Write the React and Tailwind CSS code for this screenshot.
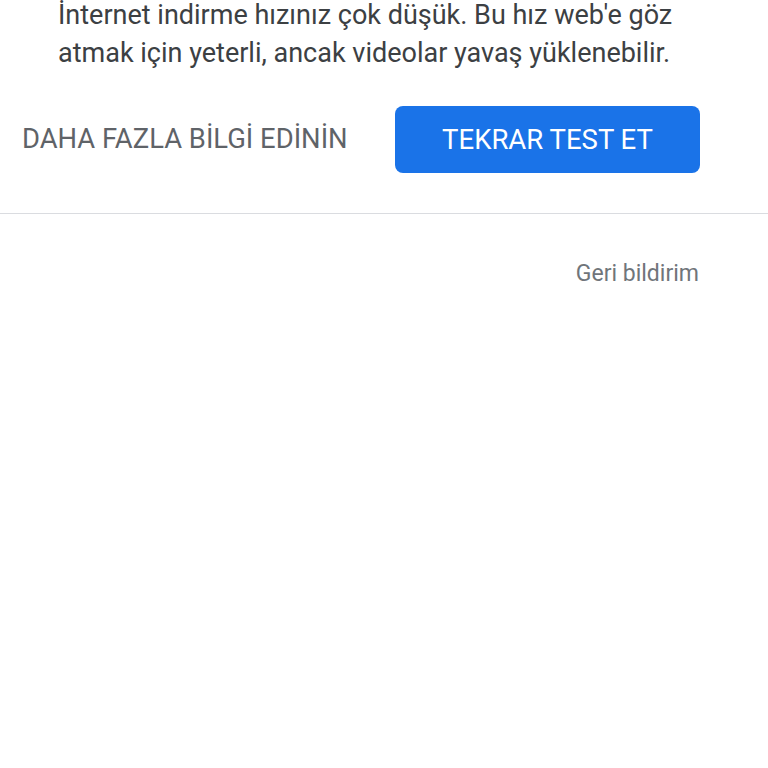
import React from 'react'

const App = () => {
    return (
        <div className="w-[768px] h-[768px] bg-white overflow-hidden" style={{fontFamily: 'Roboto, "Noto Sans", sans-serif'}}>
            <p className="mt-[-4px] pl-[58px] text-[27px] leading-[38px] text-[#3c4043] whitespace-nowrap">
                İnternet indirme hızınız çok düşük. Bu hız web'e göz<br/>
                atmak için yeterli, ancak videolar yavaş yüklenebilir.
            </p>
            <div className="flex items-center justify-between pl-[22px] pr-[68px] mt-[34px]">
                <button className="text-[27.4px] text-[#5f6368]">DAHA FAZLA BİLGİ EDİNİN</button>
                <button className="w-[305px] h-[67px] rounded-lg bg-[#1a73e8] text-white text-[27.5px]">
                    TEKRAR TEST ET
                </button>
            </div>
            <div className="mt-[40px] border-t border-[#dadce0]"></div>
            <div className="flex justify-end pr-[69px] pt-[43px]">
                <span className="text-[23px] text-[#70757a]">Geri bildirim</span>
            </div>
        </div>
    )
}
export default App
